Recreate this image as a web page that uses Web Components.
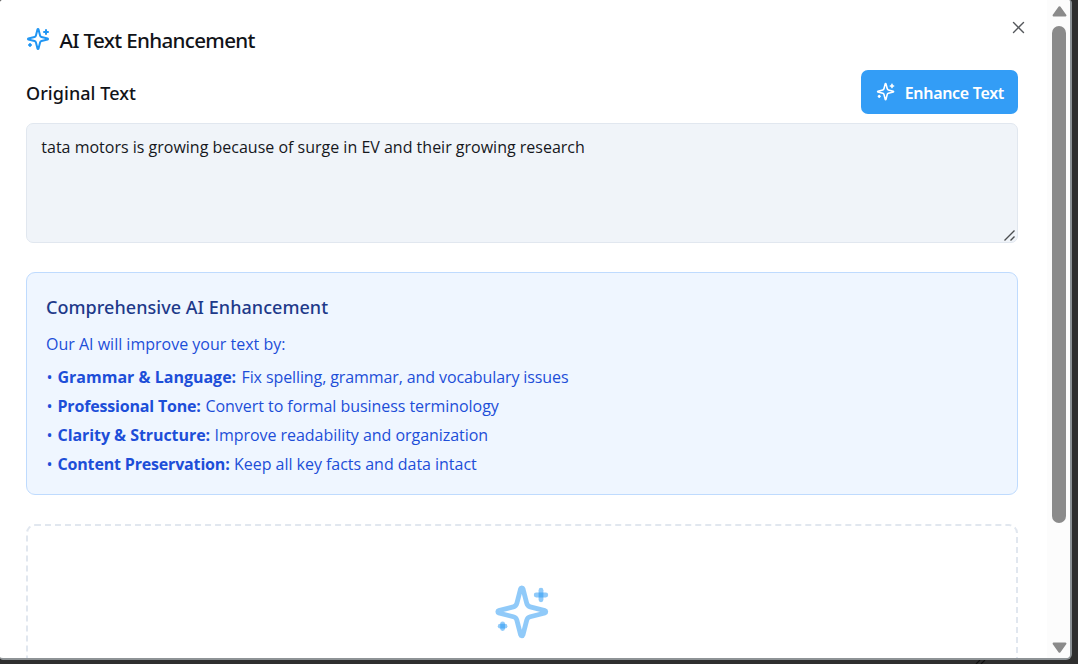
<!DOCTYPE html>
<html lang="en">
<head>
<meta charset="utf-8">
<title>AI Text Enhancement</title>
<style>
html,body{margin:0;height:100%;overflow:hidden;background:#2e2e2e}
body{font:400 16px/29px "Open Sans","Noto Sans",sans-serif;color:#16181d}
</style>
</head>
<body>
<app-dialog>
  <dialog-title slot="header">AI Text Enhancement</dialog-title>
  <section-bar label="Original Text"><action-button slot="action">Enhance Text</action-button></section-bar>
  <text-field>tata motors is growing because of surge in EV and their growing research</text-field>
  <info-card heading="Comprehensive AI Enhancement" intro="Our AI will improve your text by:">
    <info-item label="Grammar &amp; Language:" style="--label:180px;--ls:-.1px">Fix spelling, grammar, and vocabulary issues</info-item>
    <info-item label="Professional Tone:" style="--label:144px;--lls:-.18px;--ls:-.05px">Convert to formal business terminology</info-item>
    <info-item label="Clarity &amp; Structure:" style="--label:153px;--lls:-.06px;--ls:-.04px">Improve readability and organization</info-item>
    <info-item label="Content Preservation:" style="--label:172.5px;--lls:-.17px;--ls:-.03px">Keep all key facts and data intact</info-item>
  </info-card>
  <empty-panel></empty-panel>
</app-dialog>
<backdrop-grip></backdrop-grip>
<script>
const define = (name, html) => customElements.define(name, class extends HTMLElement {
  constructor() {
    super();
    const root = this.attachShadow({mode: 'open'});
    root.innerHTML = html;
    root.querySelectorAll('[data-attr]').forEach(el => { el.textContent = this.getAttribute(el.dataset.attr); });
  }
});

define('sparkle-icon', `<style>:host{display:block;flex:none;width:24px;height:24px}svg{display:block;width:100%;height:100%}</style>
<svg viewBox="0 0 24 24" fill="none" stroke="currentColor" stroke-width="2" stroke-linecap="round" stroke-linejoin="round"><path d="M9.937 15.5A2 2 0 0 0 8.5 14.063l-6.135-1.582a.5.5 0 0 1 0-.962L8.5 9.936A2 2 0 0 0 9.937 8.5l1.582-6.135a.5.5 0 0 1 .963 0L14.063 8.5A2 2 0 0 0 15.5 9.937l6.135 1.581a.5.5 0 0 1 0 .964L15.5 14.063a2 2 0 0 0-1.437 1.437l-1.582 6.135a.5.5 0 0 1-.963 0z"/><path d="M20 3v4"/><path d="M22 5h-4"/><path d="M4 17v2"/><path d="M5 18H3"/></svg>`);

define('scroll-rail', `<style>
:host{display:flex;flex-direction:column;align-items:center;box-sizing:border-box;width:23px;padding:6px 0 5px 1px;background:#fcfcfc}
svg{display:block;flex:none;width:15px;height:11px;fill:#8b8b8b;stroke:#8b8b8b;stroke-width:2;stroke-linejoin:round}
.track{flex:1;padding-top:9px}
.thumb{width:13.5px;height:497px;border-radius:7px;background:#8b8b8b}
</style>
<svg viewBox="0 0 15 11"><path d="M7.5 1.2 13.4 9.4H1.6z"/></svg>
<div class="track"><div class="thumb"></div></div>
<svg viewBox="0 0 15 11"><path d="M7.5 9.8 13.4 1.6H1.6z"/></svg>`);

define('app-dialog', `<style>
:host{display:flex;box-sizing:border-box;width:1072px;height:660px;background:#fff;border-right:2px solid #8a9094;border-bottom:2px solid #8e9396;border-radius:2px 3px 6px 3px;overflow:hidden}
main{flex:1;min-width:0;box-sizing:border-box;padding:26px 29px 0 26px;overflow:hidden}
header{display:flex;justify-content:space-between;height:44px}
.close{display:block;width:13px;height:13px;margin:-5px -7px 0 0;stroke:#55585c;stroke-width:1.4;stroke-linecap:round}
</style>
<main><header><slot name="header"></slot><svg class="close" viewBox="0 0 13 13"><path d="M1.5 1.6l10 10M11.5 1.6l-10 10"/></svg></header><slot></slot></main>
<scroll-rail></scroll-rail>`);

define('dialog-title', `<style>
:host{display:flex;gap:9.5px;height:28px;font:500 20.6px/29px "Noto Sans","Open Sans",sans-serif;letter-spacing:-.68px;color:#111318;white-space:nowrap}
sparkle-icon{color:#2196f3;margin-top:1px}
</style><sparkle-icon></sparkle-icon><span><slot></slot></span>`);

define('section-bar', `<style>
:host{display:flex;justify-content:space-between;align-items:center;height:44px;margin-bottom:9px}
h2{margin:2px 0 0;font:500 18px/28px "Noto Sans","Open Sans",sans-serif;letter-spacing:.06px;color:#111318}
</style><h2 data-attr="label"></h2><slot name="action"></slot>`);

define('action-button', `<style>
:host{display:block}
button{display:flex;align-items:center;gap:9.5px;box-sizing:border-box;width:157px;height:44px;padding:0 0 0 15px;border:0;border-radius:7px;background:#339df6;color:#fff;font:600 16px/28px "Noto Sans","Open Sans",sans-serif;letter-spacing:-.3px;white-space:nowrap}
sparkle-icon{width:19.2px;height:19.2px;margin-bottom:1px}
span{margin-top:2px}
</style><button><sparkle-icon></sparkle-icon><span><slot></slot></span></button>`);

define('text-field', `<style>
:host{display:flex;box-sizing:border-box;height:120px;margin-bottom:29px;padding:9px 1px 0 14.3px;border:1px solid #e1e7ef;border-radius:7px;background:#f0f4f9;color:#16181d}
p{flex:1;margin:0;white-space:nowrap}
svg{align-self:flex-end;width:13px;height:13px;stroke:#4b4d50;stroke-width:1.4}
</style><p><slot></slot></p><svg viewBox="0 0 13 13"><path d="M1.5 11.5 11.5 1.5M7.5 11.5l4-4"/></svg>`);

define('info-card', `<style>
:host{display:block;box-sizing:border-box;height:223px;margin-bottom:29px;padding:20px 19px 0;border:1px solid #bfdbfe;border-radius:9px;background:#eff6ff;color:#1d4ed8}
h3{margin:0 0 9px;font:500 18px/28px "Noto Sans","Open Sans",sans-serif;letter-spacing:.04px;color:#1e3a8a}
p{margin:0 0 4px}
ul{margin:0;padding:0;list-style:none}
</style><h3 data-attr="heading"></h3><p data-attr="intro"></p><ul><slot></slot></ul>`);

define('info-item', `<style>
:host{display:flex;height:29px;white-space:nowrap}
.dot{width:11.5px;flex:none;text-indent:.5px}
b{flex:none;width:var(--label);margin-right:4px;font-weight:700;letter-spacing:var(--lls,0)}
.text{letter-spacing:var(--ls,0)}
</style><span class="dot">•</span><b data-attr="label"></b><span class="text"><slot></slot></span>`);

define('empty-panel', `<style>
:host{display:flex;justify-content:center;box-sizing:border-box;height:260px;padding-top:57px;border:2px dashed #e1e7ef;border-radius:9px}
sparkle-icon{width:57.6px;height:57.6px;color:rgba(33,150,243,.5)}
</style><sparkle-icon></sparkle-icon>`);

define('backdrop-grip', `<style>
:host{display:block;height:4px;padding-left:975px}
svg{display:block;width:14px;height:4px;stroke:#111;stroke-width:1.2}
</style><svg viewBox="0 0 14 4"><path d="M1 4 5 0M6 4l4-4"/></svg>`);
</script>
</body>
</html>
